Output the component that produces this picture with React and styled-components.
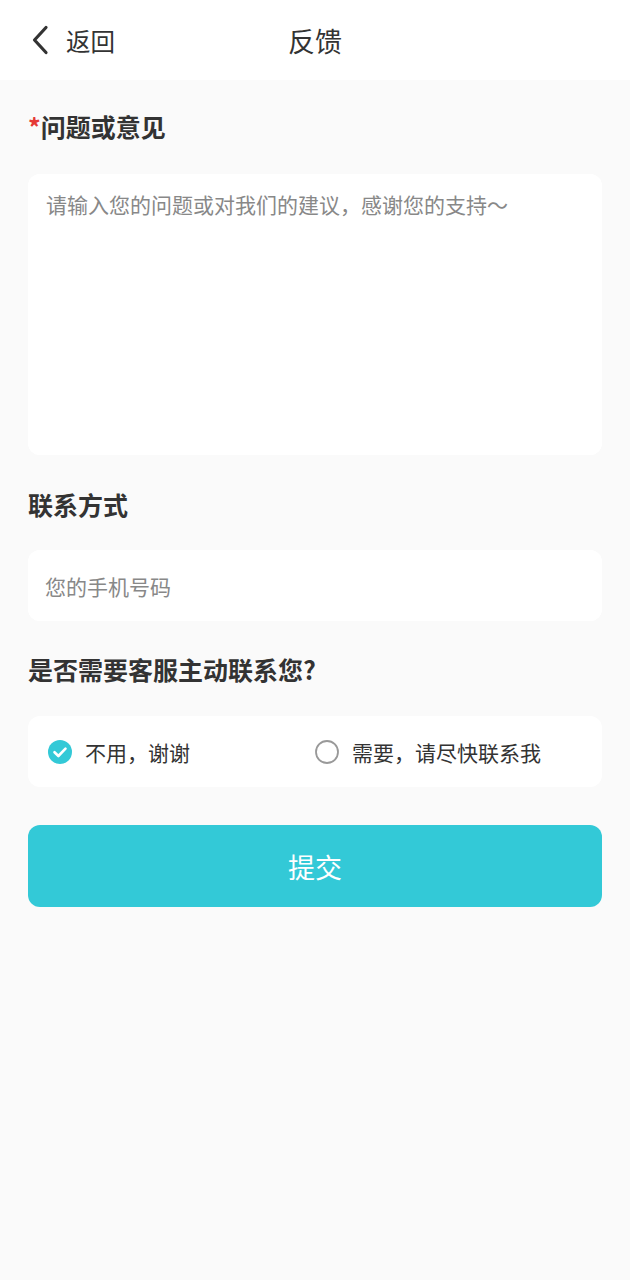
import React, { useState } from 'react';
import styled, { createGlobalStyle } from 'styled-components';

const GlobalStyle = createGlobalStyle`
  html, body {
    margin: 0;
    padding: 0;
    background: #fafafa;
    font-family: "Noto Sans CJK SC", "Noto Sans", sans-serif;
    color: #333;
  }
  * { box-sizing: border-box; }
`;

const Page = styled.div`
  min-height: 1280px;
  background: #fafafa;
`;

const Header = styled.header`
  height: 80px;
  background: #fff;
  display: grid;
  grid-template-columns: 1fr auto 1fr;
  align-items: center;
  padding: 0 28px;
`;

const Back = styled.button`
  display: flex;
  align-items: center;
  gap: 16px;
  background: none;
  border: none;
  padding: 0 0 0 2px;
  font: inherit;
  font-size: 24.5px;
  color: #333;
  justify-self: start;
`;

const Title = styled.h1`
  margin: 0;
  font-size: 27px;
  font-weight: 400;
  color: #333;
`;

const Body = styled.main`
  padding: 0 28px;
  display: flex;
  flex-direction: column;
`;

const Label = styled.div`
  font-size: 25px;
  font-weight: 700;
  line-height: 34px;
  color: #333;
  margin-top: ${(p) => p.$top}px;
  margin-bottom: ${(p) => p.$bottom}px;
`;

const Star = styled.span`
  color: #e53935;
`;

const Card = styled.div`
  background: #fff;
  border-radius: 12px;
`;

const TextArea = styled.textarea`
  display: block;
  width: 100%;
  height: 281px;
  border: none;
  outline: none;
  resize: none;
  background: #fff;
  border-radius: 12px;
  padding: 15px 18px;
  font: inherit;
  font-size: 21px;
  line-height: 30px;
  color: #333;
  &::placeholder { color: #888; }
`;

const Input = styled.input`
  display: block;
  width: 100%;
  height: 71px;
  border: none;
  outline: none;
  background: #fff;
  border-radius: 12px;
  padding: 0 17px;
  font: inherit;
  font-size: 21px;
  color: #333;
  &::placeholder { color: #888; }
`;

const RadioRow = styled(Card)`
  height: 71px;
  display: grid;
  grid-template-columns: 1fr 1fr;
  align-items: center;
  padding: 0 20px;
`;

const Option = styled.label`
  display: flex;
  align-items: center;
  gap: 13px;
  font-size: 21px;
  color: #333;
  cursor: pointer;
`;

const SubmitButton = styled.button`
  margin-top: 38px;
  height: 82px;
  border: none;
  border-radius: 12px;
  background: #33c9d7;
  color: #fff;
  font: inherit;
  font-size: 27px;
`;

const Chevron = () => (
  <svg width="20" height="30" viewBox="0 0 20 30">
    <path d="M16 2.5 L4.5 15 L16 27.5" fill="none" stroke="#333" strokeWidth="3.2" strokeLinecap="round" strokeLinejoin="round" />
  </svg>
);

const RadioIcon = ({ checked }) =>
  checked ? (
    <svg width="24" height="24" viewBox="0 0 24 24">
      <circle cx="12" cy="12" r="12" fill="#33c9d7" />
      <path d="M6.5 12.2 L10.4 16 L17.5 8.6" fill="none" stroke="#fff" strokeWidth="2.6" strokeLinecap="round" strokeLinejoin="round" />
    </svg>
  ) : (
    <svg width="24" height="24" viewBox="0 0 24 24">
      <circle cx="12" cy="12" r="11" fill="none" stroke="#999" strokeWidth="1.8" />
    </svg>
  );

export default function App() {
  const [contact, setContact] = useState(false);

  return (
    <Page>
      <GlobalStyle />
      <Header>
        <Back>
          <Chevron />
          返回
        </Back>
        <Title>反馈</Title>
        <div />
      </Header>
      <Body>
        <Label $top={29} $bottom={31}>
          <Star>*</Star>问题或意见
        </Label>
        <Card>
          <TextArea placeholder="请输入您的问题或对我们的建议，感谢您的支持～" />
        </Card>
        <Label $top={32} $bottom={29}>联系方式</Label>
        <Card>
          <Input placeholder="您的手机号码" />
        </Card>
        <Label $top={31} $bottom={30}>是否需要客服主动联系您?</Label>
        <RadioRow>
          <Option onClick={() => setContact(false)}>
            <RadioIcon checked={!contact} />
            不用，谢谢
          </Option>
          <Option onClick={() => setContact(true)}>
            <RadioIcon checked={contact} />
            需要，请尽快联系我
          </Option>
        </RadioRow>
        <SubmitButton>提交</SubmitButton>
      </Body>
    </Page>
  );
}
